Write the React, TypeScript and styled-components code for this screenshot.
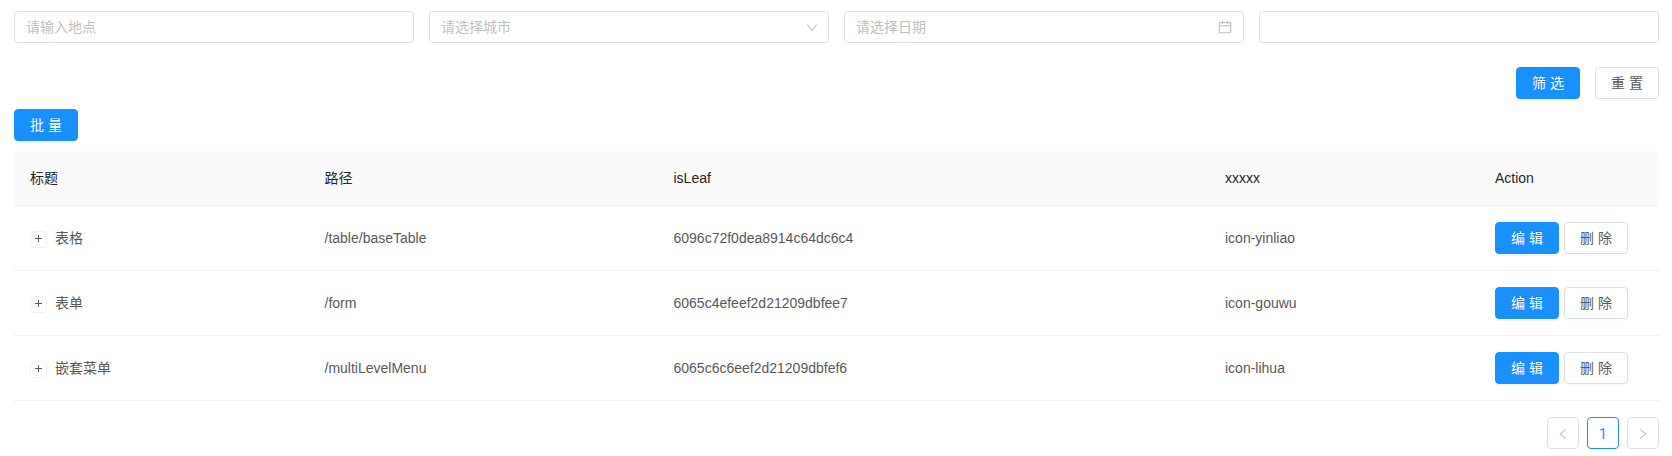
import React from "react";
import styled, { createGlobalStyle, css } from "styled-components";
import { AiOutlineCalendar, AiOutlineDown, AiOutlineLeft, AiOutlineRight } from "react-icons/ai";

const GlobalStyle = createGlobalStyle`
  *, *::before, *::after { box-sizing: border-box; }
  body {
    margin: 0;
    background: #fff;
    color: #595959;
    font: 14px/22px "Liberation Sans", "Noto Sans CJK SC", sans-serif;
  }
`;

const Page = styled.main`
  padding: 11px 13px 0 14px;
`;

const Filters = styled.div`
  display: grid;
  grid-template-columns: repeat(4, 1fr);
  gap: 15px;
`;

const Field = styled.label`
  display: flex;
  align-items: center;
  height: 32px;
  padding: 0 11px;
  border: 1px solid #dce0e6;
  border-radius: 4px;

  svg { flex: none; color: #bfbfbf; }
`;

const SelectArrow = styled(AiOutlineDown)`
  margin: 1px -1px 0 0;
`;

const FieldInput = styled.input`
  flex: 1;
  min-width: 0;
  padding: 0;
  border: 0;
  outline: 0;
  background: none;
  color: inherit;
  font: inherit;

  &::placeholder { color: #bfbfbf; opacity: 1; }
`;

const FilterActions = styled.div`
  display: flex;
  justify-content: flex-end;
  gap: 15px;
  margin-top: 24px;
`;

const Button = styled.button<{ $primary?: boolean }>`
  width: 64px;
  height: 32px;
  padding: 0 0 0 4px;
  border: 1px solid #dce0e6;
  border-radius: 4px;
  background: #fff;
  color: #595959;
  font: inherit;
  letter-spacing: 4px;
  white-space: nowrap;
  box-shadow: 0 2px 0 rgba(0, 0, 0, 0.016);

  ${({ $primary }) =>
    $primary &&
    css`
      border-color: #1890ff;
      background: #1890ff;
      color: #fff;
      text-shadow: 0 -1px 0 rgba(0, 0, 0, 0.12);
      box-shadow: 0 2px 0 rgba(0, 0, 0, 0.043);
    `}
`;

const Toolbar = styled.div`
  display: flex;
  margin: 10px 0;
`;

const Table = styled.table`
  width: 100%;
  table-layout: fixed;
  border-collapse: separate;
  border-spacing: 0;
`;

const HeadCell = styled.th<{ $width: number }>`
  width: ${({ $width }) => $width}px;
  height: 55px;
  padding: 0 16px;
  border-bottom: 1px solid #f0f0f0;
  background: #fafafa;
  color: #262626;
  font-weight: 400;
  text-align: left;

  &:first-child { border-top-left-radius: 4px; }
  &:last-child { border-top-right-radius: 4px; }
`;

const Cell = styled.td`
  height: 65px;
  padding: 0 16px;
  border-bottom: 1px solid #f0f0f0;
`;

const TitleContent = styled.div`
  display: flex;
  align-items: center;
  gap: 8px;
`;

const ExpandButton = styled.button`
  display: grid;
  place-items: center;
  width: 17px;
  height: 17px;
  margin-top: 2px;
  padding: 0;
  border: 1px solid #f0f0f0;
  border-radius: 4px;
  background: #fff;
  color: #595959;

  &::before, &::after {
    content: "";
    grid-area: 1 / 1;
    width: 7px;
    height: 1px;
    margin-top: -2px;
    background: currentColor;
  }
  &::after { transform: rotate(90deg); }
`;

const RowActions = styled.div`
  display: flex;
  gap: 5px;
`;

const Pagination = styled.nav`
  display: flex;
  justify-content: flex-end;
  gap: 8px;
  margin-top: 16px;
`;

const PageButton = styled.button<{ $active?: boolean }>`
  display: grid;
  place-items: center;
  width: 32px;
  height: 32px;
  padding: 2px 0 0;
  border: 1px solid ${({ $active }) => ($active ? "#1890ff" : "#dce0e6")};
  border-radius: 4px;
  background: #fff;
  color: ${({ $active }) => ($active ? "#1890ff" : "#bfbfbf")};
  font: 14px/22px Roboto, "Liberation Sans", sans-serif;
`;

const iconBox = "64 64 896 896";

const columns = [
  { label: "标题", width: 294.5 },
  { label: "路径", width: 349 },
  { label: "isLeaf", width: 551.5 },
  { label: "xxxxx", width: 270 },
  { label: "Action", width: 180 },
];

const rows = [
  { title: "表格", path: "/table/baseTable", id: "6096c72f0dea8914c64dc6c4", icon: "icon-yinliao" },
  { title: "表单", path: "/form", id: "6065c4efeef2d21209dbfee7", icon: "icon-gouwu" },
  { title: "嵌套菜单", path: "/multiLevelMenu", id: "6065c6c6eef2d21209dbfef6", icon: "icon-lihua" },
];

export default function App() {
  return (
    <>
      <GlobalStyle />
      <Page>
        <Filters>
          <Field>
            <FieldInput placeholder="请输入地点" />
          </Field>
          <Field>
            <FieldInput placeholder="请选择城市" readOnly />
            <SelectArrow size={12} viewBox={iconBox} />
          </Field>
          <Field>
            <FieldInput placeholder="请选择日期" />
            <AiOutlineCalendar size={14} viewBox={iconBox} />
          </Field>
          <Field>
            <FieldInput />
          </Field>
        </Filters>
        <FilterActions>
          <Button $primary>筛选</Button>
          <Button>重置</Button>
        </FilterActions>
        <Toolbar>
          <Button $primary>批量</Button>
        </Toolbar>
        <Table>
          <thead>
            <tr>
              {columns.map(({ label, width }) => (
                <HeadCell key={label} $width={width}>{label}</HeadCell>
              ))}
            </tr>
          </thead>
          <tbody>
            {rows.map((row) => (
              <tr key={row.id}>
                <Cell>
                  <TitleContent>
                    <ExpandButton aria-label="展开" />
                    {row.title}
                  </TitleContent>
                </Cell>
                <Cell>{row.path}</Cell>
                <Cell>{row.id}</Cell>
                <Cell>{row.icon}</Cell>
                <Cell>
                  <RowActions>
                    <Button $primary>编辑</Button>
                    <Button>删除</Button>
                  </RowActions>
                </Cell>
              </tr>
            ))}
          </tbody>
        </Table>
        <Pagination>
          <PageButton aria-label="上一页"><AiOutlineLeft size={12} viewBox={iconBox} /></PageButton>
          <PageButton $active>1</PageButton>
          <PageButton aria-label="下一页"><AiOutlineRight size={12} viewBox={iconBox} /></PageButton>
        </Pagination>
      </Page>
    </>
  );
}
